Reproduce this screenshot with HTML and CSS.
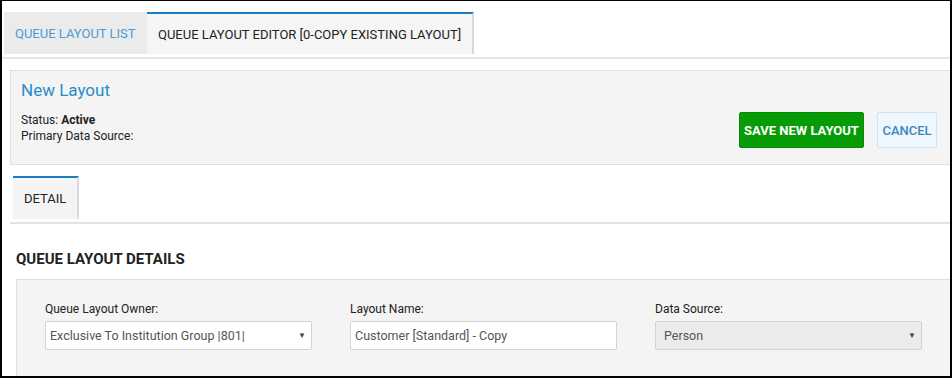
FILE: index.html
```html
<!DOCTYPE html>
<html>
<head>
<meta charset="utf-8">
<link rel="stylesheet" href="styles.css">
</head>
<body>
<div class="frame">
  <div class="top-tabs">
    <div class="tab tab-inactive">QUEUE LAYOUT LIST</div>
    <div class="tab tab-active">QUEUE LAYOUT EDITOR [0-COPY EXISTING LAYOUT]</div>
  </div>
  <div class="header-panel">
    <div class="header-info">
      <div class="title">New Layout</div>
      <div class="meta">Status: <b>Active</b></div>
      <div class="meta">Primary Data Source:</div>
    </div>
    <div class="actions">
      <button class="btn btn-save">SAVE NEW LAYOUT</button>
      <button class="btn btn-cancel">CANCEL</button>
    </div>
  </div>
  <div class="sub-tabs">
    <div class="sub-tab">DETAIL</div>
  </div>
  <h2 class="section-title">QUEUE LAYOUT DETAILS</h2>
  <div class="form-panel">
    <div class="field">
      <label class="label">Queue Layout Owner:</label>
      <div class="control select">
        <span>Exclusive To Institution Group |801|</span>
        <span class="caret">▼</span>
      </div>
    </div>
    <div class="field">
      <label class="label">Layout Name:</label>
      <div class="control">
        <span>Customer [Standard] - Copy</span>
      </div>
    </div>
    <div class="field">
      <label class="label">Data Source:</label>
      <div class="control select disabled">
        <span>Person</span>
        <span class="caret">▼</span>
      </div>
    </div>
  </div>
</div>
</body>
</html>
```
FILE: styles.css
```css
* { box-sizing: border-box; }
html, body { margin: 0; padding: 0; background: #fff; }
body {
  font-family: Roboto, "Liberation Sans", Arial, sans-serif;
  color: #222;
  font-size: 12px;
}
.frame {
  width: 952px;
  height: 378px;
  overflow: hidden;
  border-style: solid;
  border-color: #000;
  border-width: 1px 2px 2px 2px;
  background: #fff;
}
.top-tabs {
  display: flex;
  margin-top: 11px;
  padding-left: 2px;
  padding-bottom: 3px;
  border-bottom: 2px solid #e6e6e6;
}
.tab {
  height: 42px;
  display: flex;
  align-items: center;
  font-size: 13px;
}
.tab-inactive {
  width: 143px;
  background: #ebebeb;
  color: #4a9ad3;
  padding-left: 11px;
}
.tab-active {
  width: 327px;
  background: #f5f5f5;
  border-top: 2px solid #1c7dc0;
  border-right: 2px solid #d9d9d9;
  padding-left: 11px;
  color: #222;
}
.header-panel {
  margin: 11px 0 0 8px;
  height: 95px;
  background: #f4f4f4;
  border: 1px solid #e0e0e0;
  border-right: none;
  display: flex;
  justify-content: space-between;
  padding: 9px 13px 0 10px;
}
.title {
  font-size: 17px;
  color: #2a8bcc;
  line-height: 20px;
  margin-bottom: 12px;
}
.meta {
  line-height: 16px;
  font-size: 12px;
}
.meta b { font-weight: 700; }
.actions {
  display: flex;
  gap: 13px;
  padding-top: 32px;
}
.btn {
  height: 36px;
  font-family: inherit;
  font-size: 13px;
  border-radius: 2px;
  cursor: pointer;
  padding: 0;
}
.btn-save {
  width: 125px;
  background: #079c07;
  border: 1px solid #068c06;
  color: #fff;
  font-weight: 700;
}
.btn-cancel {
  width: 60px;
  background: #eef7fd;
  border: 1px solid #cfe4f2;
  color: #3a88c2;
  font-weight: 500;
}
.sub-tabs {
  margin: 11px 0 0 8px;
  padding-left: 3px;
  padding-bottom: 3px;
  border-bottom: 2px solid #e2e2e2;
  display: flex;
}
.sub-tab {
  width: 66px;
  height: 43px;
  background: #f4f4f4;
  border-top: 2px solid #1c7dc0;
  border-right: 2px solid #d9d9d9;
  display: flex;
  align-items: center;
  padding-left: 11px;
  font-size: 13px;
}
.section-title {
  margin: 26px 0 0 14px;
  font-size: 15px;
  font-weight: 700;
  line-height: 18px;
  color: #222;
}
.form-panel {
  margin: 11px 0 0 14px;
  height: 120px;
  background: #f4f4f4;
  border: 1px solid #e0e0e0;
  border-right: none;
  display: grid;
  grid-template-columns: repeat(3, 267px);
  column-gap: 38px;
  padding: 21px 0 0 28px;
  align-content: start;
}
.label {
  display: block;
  font-size: 12px;
  line-height: 16px;
  margin-bottom: 4px;
  color: #222;
}
.control {
  height: 29px;
  background: #fff;
  border: 1px solid #d3d3d3;
  border-radius: 2px;
  display: flex;
  align-items: center;
  justify-content: space-between;
  padding: 0 5px 0 4px;
  font-size: 12.5px;
  color: #555;
}
.control.disabled { background: #ebebeb; padding-left: 8px; }
.caret {
  font-size: 8px;
  color: #444;
}
```
